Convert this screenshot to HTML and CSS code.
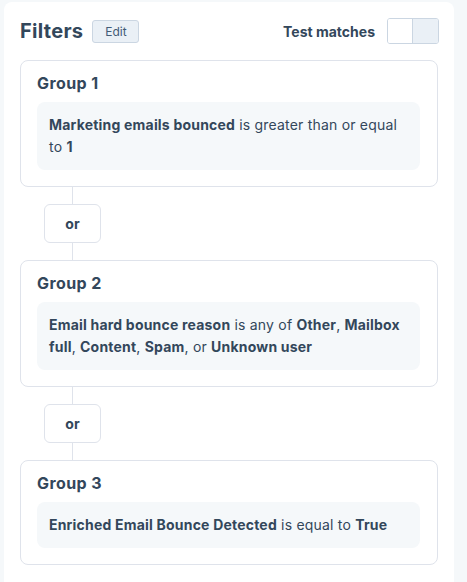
FILE: index.html
```html
<!DOCTYPE html>
<html>
<head>
<meta charset="utf-8">
<link rel="stylesheet" href="styles.css">
</head>
<body>
<div class="panel">
  <div class="header">
    <div class="title-wrap">
      <h1 class="title">Filters</h1>
      <button class="edit-btn">Edit</button>
    </div>
    <div class="test-wrap">
      <span class="test-label">Test matches</span>
      <span class="toggle"><span class="toggle-on"></span><span class="toggle-off"></span></span>
    </div>
  </div>
  <div class="groups">
    <div class="group">
      <div class="group-title">Group 1</div>
      <div class="rule"><b>Marketing emails bounced</b> is greater than or equal to <b>1</b></div>
    </div>
    <div class="connector"><span class="line"></span><span class="or">or</span><span class="line"></span></div>
    <div class="group">
      <div class="group-title">Group 2</div>
      <div class="rule"><b>Email hard bounce reason</b> is any of <b>Other</b>, <b>Mailbox full</b>, <b>Content</b>, <b>Spam</b>, or <b>Unknown user</b></div>
    </div>
    <div class="connector"><span class="line"></span><span class="or">or</span><span class="line"></span></div>
    <div class="group">
      <div class="group-title">Group 3</div>
      <div class="rule"><b>Enriched Email Bounce Detected</b> is equal to <b>True</b></div>
    </div>
  </div>
</div>
</body>
</html>
```

FILE: styles.css
```css
* { box-sizing: border-box; }
html, body { height: 100%; }
body {
  margin: 0;
  background: #f5f8fa;
  font-family: "Inter", "Lato", sans-serif;
  color: #33475b;
  padding: 2px 13px 0 4px;
}
.panel {
  background: #fff;
  border-radius: 8px 8px 0 0;
  min-height: 100%;
  padding: 16px 16px 0 16px;
}
.header {
  display: flex;
  justify-content: space-between;
  align-items: center;
  height: 26px;
}
.title-wrap { display: flex; align-items: center; gap: 9px; }
.title {
  margin: 0;
  font-size: 20px;
  font-weight: 700;
  line-height: 26px;
  letter-spacing: 0.3px;
}
.edit-btn {
  font-family: inherit;
  font-size: 12px;
  color: #425b76;
  background: #eaf0f6;
  border: 1px solid #cbd6e2;
  border-radius: 3px;
  height: 23px;
  width: 47px;
  padding: 0;
}
.test-wrap { display: flex; align-items: center; gap: 12px; margin-right: -1px; }
.test-label { font-size: 14px; font-weight: 700; }
.toggle {
  display: flex;
  width: 52px;
  height: 26px;
  border: 1px solid #cbd6e2;
  border-radius: 3px;
  overflow: hidden;
}
.toggle-on { width: 25px; background: #fff; border-right: 1px solid #cbd6e2; }
.toggle-off { flex: 1; background: #eaf0f6; }
.groups {
  margin-top: 16px;
  display: flex;
  flex-direction: column;
}
.group {
  border: 1px solid #dfe3eb;
  border-radius: 8px;
  padding: 12px 17px 16px 16px;
}
.group-title {
  font-size: 16px;
  font-weight: 700;
  line-height: 20px;
  margin-bottom: 9px;
  letter-spacing: 0.4px;
}
.rule {
  background: #f5f8fa;
  border-radius: 8px;
  padding: 12px 12px;
  font-size: 14px;
  line-height: 22px;
  letter-spacing: 0.2px;
}
.rule b { font-weight: 700; }
.connector {
  display: flex;
  flex-direction: column;
  align-items: center;
  width: 57px;
  margin-left: 24px;
}
.line { width: 1px; height: 17px; background: #dfe3eb; }
.or {
  width: 57px;
  height: 39px;
  border: 1px solid #dfe3eb;
  border-radius: 6px;
  display: flex;
  align-items: center;
  justify-content: center;
  font-size: 14px;
  font-weight: 700;
}
```
